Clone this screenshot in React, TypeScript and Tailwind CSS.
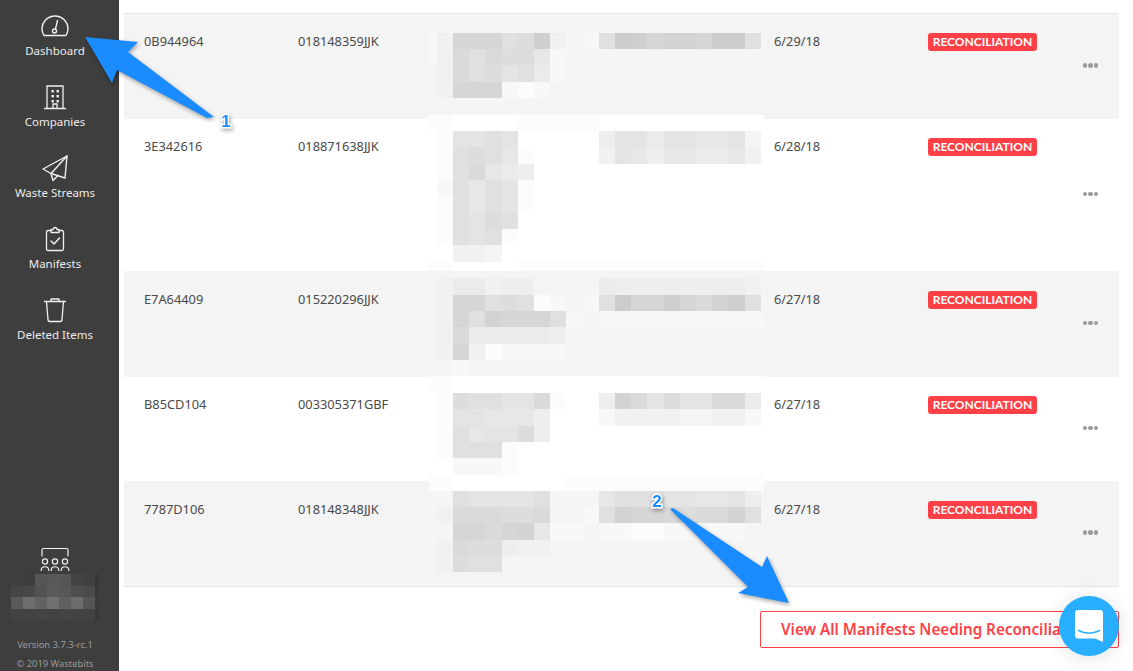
import React from "react";

const FONT = "font-['Noto_Sans','Open_Sans',sans-serif]";

function Dashboard() {
  return (
    <svg width="30" height="24" viewBox="0 0 30 24" fill="none" stroke="#f0f0f0" strokeWidth="1.4" strokeLinecap="round" strokeLinejoin="round">
      <path d="M4 21.5H26Q28 18 28 15A13 13 0 0 0 2 15Q2 18 4 21.5Z" />
      <circle cx="14.5" cy="17" r="2" />
      <path d="M15.5 15L17.5 6.5" />
    </svg>
  );
}
function Building() {
  return (
    <svg width="24" height="26" viewBox="0 0 24 26" fill="none" stroke="#f0f0f0" strokeWidth="1.3" strokeLinecap="round">
      <path d="M4 24V2H20V24" />
      <path d="M1.5 24.5H22.5" />
      <path d="M10 24V20H14V24" />
      <g fill="#f0f0f0" stroke="none">
        <rect x="8.5" y="6" width="2.4" height="2.4" />
        <rect x="13.5" y="6" width="2.4" height="2.4" />
        <rect x="8.5" y="11" width="2.4" height="2.4" />
        <rect x="13.5" y="11" width="2.4" height="2.4" />
        <rect x="8.5" y="16" width="2.4" height="2.4" />
        <rect x="13.5" y="16" width="2.4" height="2.4" />
      </g>
    </svg>
  );
}
function Plane() {
  return (
    <svg width="28" height="28" viewBox="0 0 28 28" fill="none" stroke="#f0f0f0" strokeWidth="1.4" strokeLinejoin="round" strokeLinecap="round">
      <path d="M26 2L2 15L10 19.5L24 24Z" />
      <path d="M26 2L10 19.5L12 26.5L17 21.5" />
    </svg>
  );
}
function Clipboard() {
  return (
    <svg width="20" height="26" viewBox="0 0 20 26" fill="none" stroke="#f0f0f0" strokeWidth="1.3" strokeLinecap="round" strokeLinejoin="round">
      <path d="M6 4.5H3A1.5 1.5 0 0 0 1.5 6V23A1.5 1.5 0 0 0 3 24.5H17A1.5 1.5 0 0 0 18.5 23V6A1.5 1.5 0 0 0 17 4.5H14" />
      <path d="M6 6.5V3.5H8Q8.5 1.5 10 1.5Q11.5 1.5 12 3.5H14V6.5Z" />
      <path d="M6 15L9 18L14.5 12" strokeWidth="1.5" />
    </svg>
  );
}
function Trash() {
  return (
    <svg width="24" height="26" viewBox="0 0 24 26" fill="none" stroke="#f0f0f0" strokeWidth="1.3" strokeLinecap="round" strokeLinejoin="round">
      <path d="M1.5 4.5H22.5" />
      <path d="M8 4.5V2H16V4.5" />
      <path d="M3.5 4.5L5 22.5A2 2 0 0 0 7 24.5H17A2 2 0 0 0 19 22.5L20.5 4.5" />
    </svg>
  );
}
function Team() {
  return (
    <svg width="30" height="25" viewBox="0 0 30 25" fill="none" stroke="#f0f0f0" strokeWidth="1.2" strokeLinecap="round">
      <path d="M2 9V3A1.5 1.5 0 0 1 3.5 1.5H26.5A1.5 1.5 0 0 1 28 3V9" />
      <circle cx="5" cy="14.5" r="2.6" />
      <circle cx="15" cy="14.5" r="2.6" />
      <circle cx="25" cy="14.5" r="2.6" />
      <path d="M1.2 23.5C1.2 18.5 8.8 18.5 8.8 23.5" />
      <path d="M11.2 23.5C11.2 18.5 18.8 18.5 18.8 23.5" />
      <path d="M21.2 23.5C21.2 18.5 28.8 18.5 28.8 23.5" />
    </svg>
  );
}

const navItems = [
  { label: "Dashboard", icon: <Dashboard /> },
  { label: "Companies", icon: <Building /> },
  { label: "Waste Streams", icon: <Plane /> },
  { label: "Manifests", icon: <Clipboard /> },
  { label: "Deleted Items", icon: <Trash /> },
];

type Patch = { top: number; fill: string; heights: number[]; rows: string[] };
type Row = { a: string; b: string; date: string; h: number; pad: number; shaded: boolean; patch: Patch };

const rows: Row[] = [
  {
    a: "0B944964", b: "018148359JJK", date: "6/29/18", h: 105, pad: 19, shaded: true,
    patch: {
      top: 11, fill: "c", heights: [8, 16, 16, 17, 16, 17],
      rows: ["c", "db333651bcd6013223006c", "db464558dcc", "cb465769dcc", "cb333dedccc", "c"],
    },
  },
  {
    a: "3E342616", b: "018871638JJK", date: "6/28/18", h: 152, pad: 19, shaded: false,
    patch: {
      top: -4, fill: "f", heights: [16, 16, 17, 16, 16, 17, 16, 16, 17, 16],
      rows: ["eeffffeeeeef", "fe7767fffffa77977887cf", "fe6568effffb78a88998bf", "fe6489af", "fd6867ef", "fe6867ef", "fe6756ff", "fe676ef", "ffbbcf", "eeffffeeeeeeeeeeeeeeee"],
    },
  },
  {
    a: "E7A64409", b: "015220296JJK", date: "6/27/18", h: 106, pad: 20, shaded: true,
    patch: {
      top: 7, fill: "c", heights: [17, 16, 16, 17, 16, 16],
      rows: ["cb99baacccc9aaaaaaaabc", "cb33656edcd6033134216c", "cb3623336dcddddddddddd", "cb499999acc", "cb3beddddcc", "ccdc"],
    },
  },
  {
    a: "B85CD104", b: "003305371GBF", date: "6/27/18", h: 104, pad: 19, shaded: false,
    patch: {
      top: -1, fill: "f", heights: [17, 16, 17, 16, 16, 17],
      rows: ["eef", "fe566774effa247577449f", "fe77888afffdbbbbccbbdf", "fe68775af", "fe666ef", "ffdddef"],
    },
  },
  {
    a: "7787D106", b: "018148348JJK", date: "6/27/18", h: 105, pad: 20, shaded: true,
    patch: {
      top: -6, fill: "c", heights: [16, 16, 16, 17, 16, 16],
      rows: ["eefffffffeeeeeeeeeeeee", "cc677776ccc866677887ac", "cb444554ccd6233454426c", "cc334328ddcddeedddddcc", "cb455abbcc", "cb566cc"],
    },
  },
];

function gray(ch: string) {
  const v = Math.round(204 + parseInt(ch, 16) * 3.4);
  return `rgb(${v},${v},${v})`;
}

function Redaction({ patch }: { patch: Patch }) {
  return (
    <div className="absolute left-[305px] flex flex-col" style={{ top: patch.top }}>
      {patch.rows.map((r, i) => (
        <div key={i} className="grid grid-cols-[8px_16px_repeat(19,16.21px)_3px]" style={{ height: patch.heights[i] }}>
          {r.padEnd(22, patch.fill).split("").map((c, j) => (
            <div key={j} style={{ backgroundColor: gray(c) }} />
          ))}
        </div>
      ))}
    </div>
  );
}

const sidebarBlur = [
  ["#403f3f", "#3c3c3c", "#555555", "#585858", "#565656", "#434343", "#404040", "#373737"],
  ["#454545", "#484848", "#525252", "#5a5a5a", "#585858", "#4e4e4e", "#4a4a4a", "#383838"],
  ["#5a5a5a", "#6e6e6e", "#626262", "#707070", "#606060", "#6c6c6c", "#555555", "#3a3a3a"],
  ["#424242", "#424242", "#434343", "#424242", "#434343", "#424242", "#424242", "#383838"],
];

export default function App() {
  return (
    <div className={`relative flex h-[671px] w-[1133px] overflow-hidden bg-white ${FONT}`}>
      <aside className="flex w-[119px] shrink-0 flex-col items-center bg-[#3e3e3e] pt-[7px] pr-[9px] text-[#ececec]">
        {navItems.map((n) => (
          <div key={n.label} className="flex h-[71px] w-full flex-col items-center">
            <div className="flex h-[37px] items-center justify-center">{n.icon}</div>
            <div className="text-[11.5px] leading-[14px] whitespace-nowrap">{n.label}</div>
          </div>
        ))}
        <div className="mt-auto flex flex-col items-center">
          <Team />
          <div className="mt-[2px] flex flex-col">
            {sidebarBlur.map((r, i) => (
              <div key={i} className="flex h-[11.5px]">
                {r.map((c, j) => (
                  <div key={j} className={j === 7 ? "w-[4px]" : "w-[12px]"} style={{ backgroundColor: c }} />
                ))}
              </div>
            ))}
          </div>
          <div className="mt-[18px] text-[9.4px] leading-[14px] text-[#9a9a9a] whitespace-nowrap">Version 3.7.3-rc.1</div>
          <div className="mt-[5px] text-[9.4px] leading-[14px] text-[#9a9a9a] whitespace-nowrap">© 2019 Wastebits</div>
        </div>
      </aside>

      <main className="flex min-w-0 flex-1 flex-col pt-[13px] pr-[14px] pl-[5px]">
        <div className="border-y border-[#e6e6e6]">
          {rows.map((r) => (
            <div
              key={r.a}
              className={`relative grid grid-cols-[154px_476px_154px_155px_1fr] px-[20px] text-[12.8px] leading-[17px] text-[#4a4a4a] ${r.shaded ? "bg-[#f4f4f4]" : "bg-white"}`}
              style={{ height: r.h, paddingTop: r.pad }}
            >
              <div>{r.a}</div>
              <div>{r.b}</div>
              <div>{r.date}</div>
              <div>
                <span className="flex h-[18px] w-[109px] items-center justify-center rounded-[3px] bg-[#ff4046] font-['Lato',sans-serif] text-[12px] leading-none font-bold text-white">
                  RECONCILIATION
                </span>
              </div>
              <div />
              <div className="absolute top-0 right-[21px] bottom-[2px] flex items-center gap-[1px]">
                <span className="h-[4.5px] w-[4.5px] rounded-full bg-[#9b9b9b]" />
                <span className="h-[4.5px] w-[4.5px] rounded-full bg-[#9b9b9b]" />
                <span className="h-[4.5px] w-[4.5px] rounded-full bg-[#9b9b9b]" />
              </div>
              <Redaction patch={r.patch} />
            </div>
          ))}
        </div>
        <div className="mt-[24px] flex justify-end">
          <button className="flex h-[37px] w-[359px] items-center rounded-[2px] border border-[#ff4046] pl-[20px] text-[15.2px] font-semibold whitespace-nowrap text-[#ff4046]">
            View All Manifests Needing Reconciliation
          </button>
        </div>
      </main>

      <svg className="pointer-events-none absolute top-0 left-0 drop-shadow-[1px_2px_2px_rgba(0,0,0,0.35)]" width="1133" height="671" viewBox="0 0 1133 671">
        <path d="M85 37L138 42L128 52L214 117L207 118L117 70L112 83Z" fill="#1a8cff" />
        <path d="M670 509L673 508L762 567L767 556L789 603L738 593L748 587Z" fill="#1a8cff" />
        <text x="226" y="127" textAnchor="middle" fontFamily="Liberation Sans, sans-serif" fontWeight="700" fontSize="17" fill="#1a8cff" stroke="#fff" strokeWidth="3" paintOrder="stroke">1</text>
        <text x="657" y="507" textAnchor="middle" fontFamily="Liberation Sans, sans-serif" fontWeight="700" fontSize="17" fill="#1a8cff" stroke="#fff" strokeWidth="3" paintOrder="stroke">2</text>
      </svg>

      <div className="absolute top-[596px] left-[1059px] flex h-[60px] w-[60px] items-center justify-center rounded-full bg-[#27aeff] shadow-[0_2px_20px_rgba(0,0,0,0.12)]">
        <svg width="28" height="32" viewBox="0 0 28 32">
          <path d="M3 0H25A3 3 0 0 1 28 3V32L20 28.5H3A3 3 0 0 1 0 25.5V3A3 3 0 0 1 3 0Z" fill="#fff" />
          <path d="M3.5 20.5Q14 26 24.5 20.5" fill="none" stroke="#27aeff" strokeWidth="1.6" strokeLinecap="round" />
        </svg>
      </div>
    </div>
  );
}
